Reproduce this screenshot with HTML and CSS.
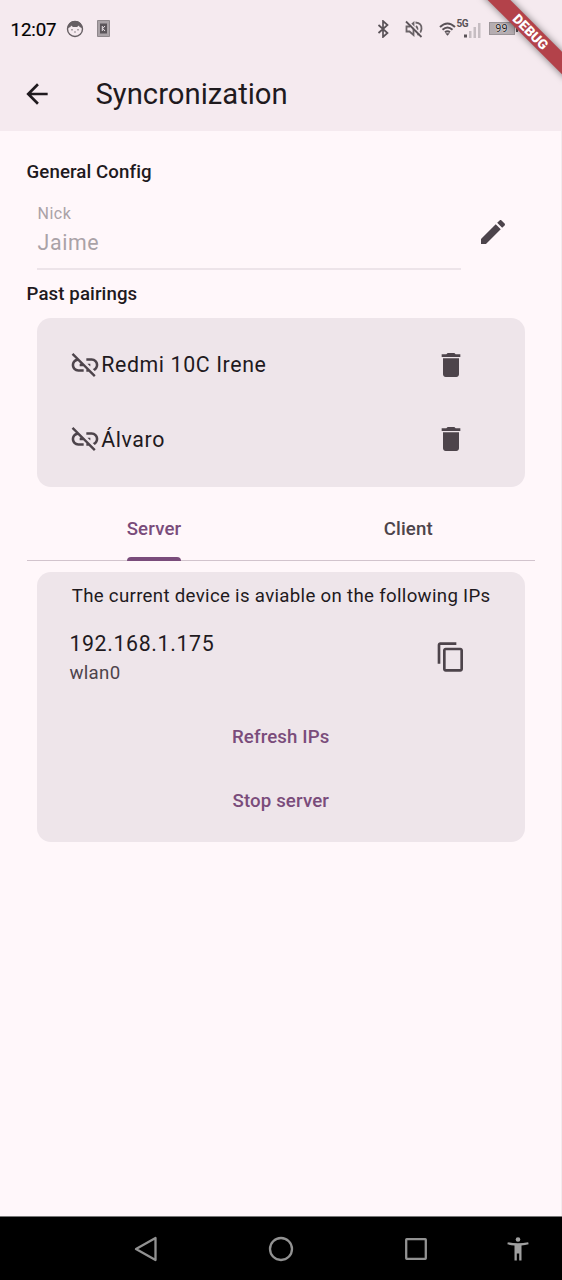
FILE: index.html
```html
<!DOCTYPE html>
<html lang="en">
<head>
<meta charset="utf-8">
<title>Syncronization</title>
<link rel="stylesheet" href="styles.css">
</head>
<body>
<div class="screen">
  <header class="header">
    <div class="status">
      <span class="clock">12:07</span>
      <svg class="cat" width="18" height="18" viewBox="0 0 18 18"><circle cx="9" cy="9" r="7.500" fill="none" stroke="#665f63" stroke-width="1.400"/><path d="M2 8C2 3 5 1 9 1s7 2 7 7l-2.500-1-.5-1.500-2 1.500H7L5 5.500 4.500 7z" fill="#665f63"/><path d="M6 9v1.500M12 9v1.500M8.300 12h1.400" stroke="#665f63" fill="none"/></svg>
      <svg class="card-icon" width="13" height="17" viewBox="0 0 13 17"><path d="M.5.5h12v16H.5z" fill="#aaa3a7" stroke="#8f888c"/><path d="M3 3.500h7v10H3z" fill="#5b555a"/><path d="M5.300 6v5M8 6L5.700 8.500 8 11" stroke="#e8e0e5" fill="none"/></svg>
      <span class="spacer"></span>
      <svg class="bt" width="12" height="18" viewBox="0 0 12 18"><path d="M1.500 5l9 8L6 17V1l4.500 4-9 8" fill="none" stroke="#595257" stroke-width="1.700"/></svg>
      <svg class="mute" width="18" height="18" viewBox="0 0 18 18"><path d="M1.500 6.500h3L8.500 3v12l-4-3.500h-3zM11 6q3 3 0 6M10.500 2.500q6.500.5 6 6.500-.5 4-4 6" fill="none" stroke="#6b6468" stroke-width="1.800"/><path d="M2.500.8l15 15" stroke="#f5eaef" stroke-width="1.500"/><path d="M1 1.500l15.500 15.500" stroke="#5c555a" stroke-width="1.800"/></svg>
      <svg class="wifi" width="17" height="14" viewBox="0 0 17 14"><path d="M1 5q7.500-7 15 0M3.500 7.700q5-4.500 10 0M6 10.200q2.500-2 5 0" fill="none" stroke="#595257" stroke-width="2"/><path d="M8.500 13.700L6.300 11.200h4.400z" fill="#595257"/></svg>
      <span class="net">5G</span>
      <svg class="bars" width="17" height="15" viewBox="0 0 17 15"><path d="M0 11.500h3v3H0z" fill="#595257"/><path d="M5 8h2.500v7H5zM9.500 4H12v11H9.500zM14 0h2.500v15H14z" fill="#c6bdc2"/></svg>
      <span class="battery">99</span>
      <span class="battery-cap"></span>
    </div>
    <div class="appbar">
      <svg class="icon back" viewBox="0 0 24 24"><path d="M20 11H7.830l5.590-5.590L12 4l-8 8 8 8 1.410-1.410L7.830 13H20v-2z"/></svg>
      <h1>Syncronization</h1>
    </div>
  </header>
  <main class="content">
    <h2>General Config</h2>
    <div class="nick-row">
      <div class="field"><span class="label">Nick</span><span class="value">Jaime</span></div>
      <svg class="icon" viewBox="0 0 24 24"><path d="M3 17.250V21h3.750L17.810 9.940l-3.750-3.750L3 17.250zM20.710 7.040c.39-.39.39-1.020 0-1.410l-2.340-2.340c-.39-.39-1.020-.39-1.410 0l-1.830 1.830 3.750 3.750 1.830-1.830z"/></svg>
    </div>
    <h2>Past pairings</h2>
    <section class="card pairings">
      <div class="pair">
        <svg class="icon" viewBox="0 0 24 24"><path d="M17 7h-4v1.900h4c1.710 0 3.100 1.390 3.100 3.100 0 1.430-.98 2.630-2.310 2.980l1.460 1.460C20.880 15.610 22 13.950 22 12c0-2.760-2.240-5-5-5zm-1 4h-2.190l2 2H16zM2 4.270l3.110 3.110C3.290 8.120 2 9.910 2 12c0 2.760 2.240 5 5 5h4v-1.900H7c-1.710 0-3.100-1.390-3.100-3.100 0-1.590 1.210-2.900 2.760-3.070L8.730 11H8v2h2.730L13 15.270V17h1.730l4.010 4L20 19.740 3.270 3 2 4.270z"/></svg>
        <span class="name">Redmi 10C Irene</span>
        <svg class="icon" viewBox="0 0 24 24"><path d="M6 19c0 1.100.9 2 2 2h8c1.100 0 2-.9 2-2V7H6v12zM19 4h-3.500l-1-1h-5l-1 1H5v2h14V4z"/></svg>
      </div>
      <div class="pair">
        <svg class="icon" viewBox="0 0 24 24"><path d="M17 7h-4v1.900h4c1.710 0 3.100 1.390 3.100 3.100 0 1.430-.98 2.630-2.310 2.980l1.460 1.460C20.880 15.610 22 13.950 22 12c0-2.760-2.240-5-5-5zm-1 4h-2.190l2 2H16zM2 4.270l3.110 3.110C3.290 8.120 2 9.910 2 12c0 2.760 2.240 5 5 5h4v-1.900H7c-1.710 0-3.100-1.390-3.100-3.100 0-1.590 1.210-2.900 2.760-3.070L8.730 11H8v2h2.730L13 15.270V17h1.730l4.010 4L20 19.740 3.270 3 2 4.270z"/></svg>
        <span class="name">Álvaro</span>
        <svg class="icon" viewBox="0 0 24 24"><path d="M6 19c0 1.100.9 2 2 2h8c1.100 0 2-.9 2-2V7H6v12zM19 4h-3.500l-1-1h-5l-1 1H5v2h14V4z"/></svg>
      </div>
    </section>
    <nav class="tabs">
      <div class="tab active"><span>Server</span></div>
      <div class="tab"><span>Client</span></div>
    </nav>
    <section class="card server">
      <p class="info">The current device is aviable on the following IPs</p>
      <div class="ip-row">
        <div class="ip"><span class="addr">192.168.1.175</span><span class="iface">wlan0</span></div>
        <svg class="icon" viewBox="0 0 24 24"><path d="M16 1H4c-1.100 0-2 .9-2 2v14h2V3h12V1zm3 4H8c-1.100 0-2 .9-2 2v14c0 1.100.9 2 2 2h11c1.100 0 2-.9 2-2V7c0-1.100-.9-2-2-2zm0 16H8V7h11v14z"/></svg>
      </div>
      <div class="action">Refresh IPs</div>
      <div class="action">Stop server</div>
    </section>
  </main>
  <footer class="navbar">
    <svg width="24" height="28" viewBox="0 0 24 28"><path d="M21.500 3v22L2 14z" fill="none" stroke="#929292" stroke-width="2.300" stroke-linejoin="round"/></svg>
    <svg width="26" height="26" viewBox="0 0 26 26"><circle cx="13" cy="13" r="11" fill="none" stroke="#929292" stroke-width="2.300"/></svg>
    <svg width="24" height="24" viewBox="0 0 24 24"><rect x="2.200" y="2.200" width="19.600" height="19.600" rx=".5" fill="none" stroke="#929292" stroke-width="2.300"/></svg>
    <svg width="22" height="24" viewBox="0 0 22 24"><circle cx="11" cy="2.500" r="2.300" fill="#a0a0a0"/><path d="M.8 5.200Q11 7.500 21.200 5.200l.4 2.100Q18 8.300 14.500 8.500V23.500h-2.300v-7H9.800v7H7.500V8.500Q4 8.300.4 7.300z" fill="#a0a0a0"/></svg>
  </footer>
  <div class="debug">DEBUG</div>
</div>
</body>
</html>
```
FILE: styles.css
```css
* { box-sizing: border-box; }
body { margin: 0; font-family: Roboto, "Noto Sans", sans-serif; color: #1f1a1e; }
.screen { position: relative; width: 562px; height: 1280px; overflow: hidden; background: #fff7fa; display: flex; flex-direction: column; }
.header { height: 131px; background: #f5eaef; flex: none; }
.status { height: 57px; padding-left: 10.500px; display: flex; align-items: center; }
.clock { width: 55px; font-size: 18.670px; line-height: 22px; font-weight: 400; letter-spacing: -.1px; -webkit-text-stroke: .2px #000; color: #000; margin-top: 2px; }
.card-icon { margin-left: 13px; }
.spacer { width: 267px; }
.mute { margin-left: 16px; }
.wifi { margin-left: 16px; }
.net { align-self: flex-start; margin: 18px 0 0 1px; width: 10px; font-size: 10px; line-height: 12px; font-weight: 700; color: #595257; letter-spacing: -.6px; }
.bars { margin: 4px 0 0 -3px; }
.battery { margin-left: 8px; width: 26px; height: 13px; background: #b5adb1; border: 1px solid #9c9599; font-size: 11px; line-height: 11.500px; text-align: center; color: #1a1a1a; text-shadow: 0 0 1px #fff, 0 0 1px #fff; }
.battery-cap { width: 2px; height: 6px; margin-left: 1px; background: #595257; }
.status svg, .battery { flex: none; }
.appbar { height: 74px; padding-left: 21px; display: flex; align-items: center; }
.icon { width: 32px; height: 32px; fill: #4d444b; flex: none; }
.back { fill: #1f1a1e; }
h1 { margin: 0 0 0 42.500px; font-size: 29.250px; line-height: 37px; font-weight: 400; }
.content { flex: 1; padding: 28px 26px 0 26.500px; border-right: 1px solid #f3ebee; }
h2 { margin: 0; height: 26px; font-size: 18.670px; line-height: 26px; font-weight: 500; letter-spacing: .1px; }
.nick-row { display: flex; align-items: center; padding: 8px 10.500px 10px; height: 96px; }
.field { width: 424px; height: 75px; border-bottom: 2px solid #ede4e9; margin-right: 16px; display: flex; flex-direction: column; padding: 8px 0 0 .5px; color: #aaa2a7; }
.label { font-size: 16px; line-height: 22px; letter-spacing: .5px; }
.value { font-size: 21.330px; line-height: 32px; letter-spacing: .63px; margin-top: 2px; }
.card { margin: 0 10.500px; background: #eee5ea; border-radius: 14px; }
.pairings { margin-top: 10.500px; height: 169.500px; padding: 10px 58px 0 32px; }
.pair { height: 74.500px; display: flex; align-items: center; }
.name { flex: 1; font-size: 21.330px; letter-spacing: .62px; padding-left: .2px; }
.tabs { height: 74px; border-bottom: 1px solid #d2c4cd; display: flex; }
.tab { flex: 1; display: flex; justify-content: center; font-size: 18.670px; font-weight: 500; letter-spacing: .13px; color: #4d444b; padding-left: .7px; }
.tab span { height: 74px; line-height: 84px; }
.tab.active span { color: #7a4c7b; }
.tab.active span::after { content: ""; display: block; height: 4px; margin-top: -14px; background: #7a4c7b; border-radius: 4px 4px 0 0; }
.server { margin-top: 11px; height: 270px; padding: 11px 58px 0 32px; }
.info { margin: 0 -28px 0 2.700px; font-size: 18.670px; line-height: 27px; letter-spacing: .31px; white-space: nowrap; }
.ip-row { height: 94px; display: flex; align-items: center; }
.ip { flex: 1; display: flex; flex-direction: column; padding: 0 0 0 .4px; }
.addr { font-size: 21.330px; line-height: 31px; letter-spacing: .63px; }
.iface { font-size: 18.670px; line-height: 28px; letter-spacing: .31px; color: #4d444b; }
.action { height: 64px; margin-right: -26px; text-align: center; font-size: 18.670px; line-height: 67px; font-weight: 500; letter-spacing: .13px; color: #7a4c7b; }
.navbar { height: 64px; flex: none; background: #000; border-top: 1px solid #777; display: flex; align-items: center; padding: 0 0 0 134px; }
.navbar svg:nth-child(2) { margin-left: 110px; }
.navbar svg:nth-child(3) { margin-left: 110px; }
.navbar svg:nth-child(4) { margin-left: 79px; }
.debug { position: absolute; left: 471px; top: 22.500px; width: 118px; height: 16px; padding-left: 2px; background: #b3424a; box-shadow: 0 0 7px rgba(0,0,0,.5); transform: rotate(45deg); color: #fff; text-align: center; font-size: 13.600px; line-height: 16px; font-weight: 900; }
```
